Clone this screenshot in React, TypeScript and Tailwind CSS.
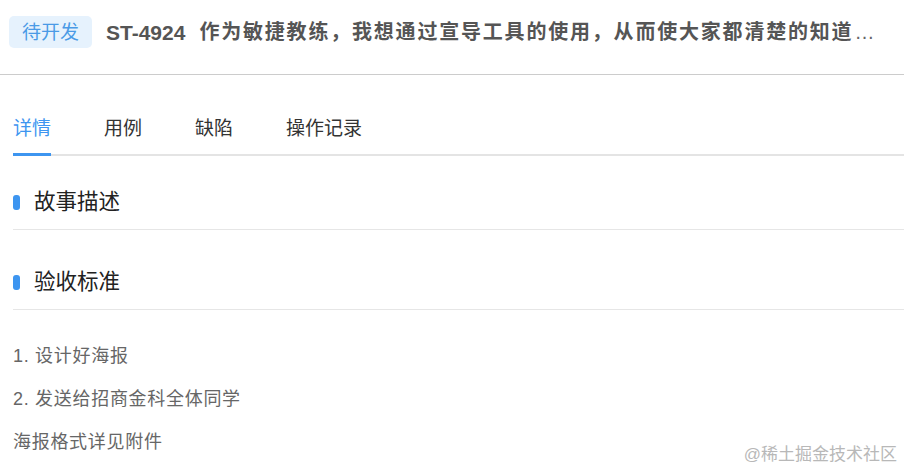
import React from "react";

const font = { fontFamily: '"Liberation Sans", "Noto Sans CJK SC", sans-serif' };

function SectionTitle({ title, h }: { title: string; h: string }) {
  return (
    <div className={"flex items-end pb-[16px] border-b border-[#e6e6e6] " + h}>
      <div className="w-[7px] h-[15px] rounded-[3px] bg-[#3d95f0] mr-[14px] mb-[3px]" />
      <span className="text-[21.5px] text-[#222] leading-none">{title}</span>
    </div>
  );
}

export default function App() {
  const tabs = ["详情", "用例", "缺陷", "操作记录"];
  return (
    <div className="w-[904px] h-[471px] bg-white overflow-hidden relative" style={font}>
      <div className="h-[75px] border-b border-[#cccccc] flex items-start pl-[9px] pt-[16px]">
        <div className="h-[32px] px-[13px] rounded-[5px] bg-[#e6f2fd] text-[#4a9ae6] text-[19px] flex items-center leading-none">
          待开发
        </div>
        <div className="ml-[14px] h-[32px] flex items-center font-bold text-[#555] whitespace-nowrap leading-none">
          <span className="text-[21px]">ST-4924</span>
          <span className="ml-[14px] text-[20px] tracking-[1.8px]">
            作为敏捷教练，我想通过宣导工具的使用，从而使大家都清楚的知道
          </span>
          <span className="text-[20px] font-normal text-[#666] ml-[1px]">…</span>
        </div>
      </div>
      <div className="pl-[13px]">
        <div className="flex h-[81px] items-end border-b-2 border-[#e4e4e4] gap-[53px]">
          {tabs.map((t, i) => (
            <div
              key={t}
              className={
                "relative pb-[16px] text-[19px] leading-none " +
                (i === 0 ? "text-[#3d95f0]" : "text-[#333]")
              }
            >
              {t}
              {i === 0 && (
                <div className="absolute left-0 right-0 bottom-[-2px] h-[3px] bg-[#3d95f0]" />
              )}
            </div>
          ))}
        </div>
        <SectionTitle title="故事描述" h="h-[74px]" />
        <SectionTitle title="验收标准" h="h-[80px]" />
        <div className="text-[18px] tracking-[0.7px] text-[#666] leading-none pt-[37px] flex flex-col gap-[25px]">
          <div>1. 设计好海报</div>
          <div>2. 发送给招商金科全体同学</div>
          <div>海报格式详见附件</div>
        </div>
      </div>
      <div className="absolute right-[7px] bottom-[8px] text-[17px] text-[#b8b8b8] leading-none">
        @稀土掘金技术社区
      </div>
    </div>
  );
}
